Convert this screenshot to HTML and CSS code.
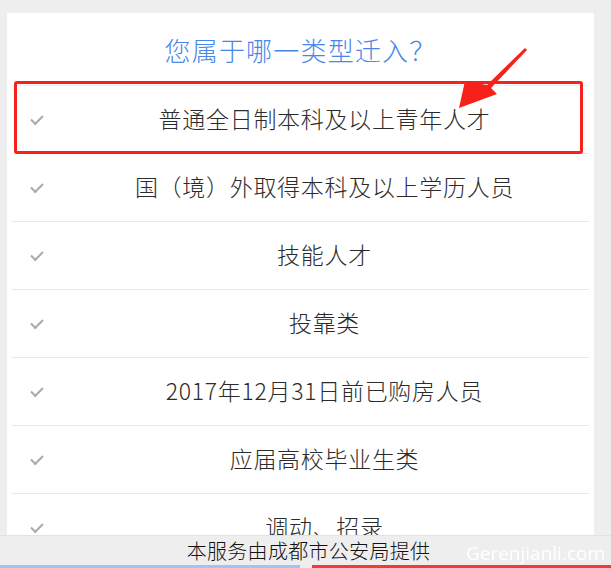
FILE: index.html
```html
<!DOCTYPE html>
<html lang="zh">
<head>
<meta charset="utf-8">
<title>您属于哪一类型迁入？</title>
<link rel="stylesheet" href="styles.css">
</head>
<body>
<div class="card">
  <h1 class="title">您属于哪一类型迁入？</h1>
  <ul class="list">
    <li class="item"><span class="check"></span><span class="label">普通全日制本科及以上青年人才</span></li>
    <li class="item"><span class="check"></span><span class="label">国（境）外取得本科及以上学历人员</span></li>
    <li class="item"><span class="check"></span><span class="label">技能人才</span></li>
    <li class="item"><span class="check"></span><span class="label">投靠类</span></li>
    <li class="item"><span class="check"></span><span class="label">2017年12月31日前已购房人员</span></li>
    <li class="item"><span class="check"></span><span class="label">应届高校毕业生类</span></li>
    <li class="item"><span class="check"></span><span class="label">调动、招录</span></li>
  </ul>
</div>

<div class="highlight"></div>
<svg class="arrow" width="80" height="80" viewBox="0 0 80 80">
  <polygon points="75,0 77,2 41,40 47,46 9,60 15,33 37,37" fill="#f5211a"/>
</svg>

<div class="footer">
  <div class="footer-text">本服务由成都市公安局提供</div>
  <div class="strip"><span class="strip-blue"></span><span class="strip-red"></span></div>
</div>
<div class="watermark">Gerenjianli.com</div>
</body>
</html>
```
FILE: styles.css
```css
html, body {
  margin: 0;
  padding: 0;
  background: #eeeeee;
  font-family: "Noto Sans CJK SC", "Noto Sans", sans-serif;
}
body {
  padding: 13px 17px 0 7px;
}
.card {
  background: #ffffff;
  padding: 0 5px 40px 5px;
}
.title {
  margin: 0;
  height: 72px;
  line-height: 72px;
  text-align: center;
  font-size: 26px;
  font-weight: 300;
  color: #4a86e8;
  letter-spacing: 1.2px;
  padding-left: 0;
  padding-top: 1px;
  box-sizing: border-box;
}
.list {
  list-style: none;
  margin: 0;
  padding: 0;
  border-top: 1px solid #eeeeee;
}
.item {
  display: flex;
  align-items: center;
  height: 67px;
  border-bottom: 1px solid #e8e8e8;
  padding-left: 18px;
}
.check {
  width: 12px;
  height: 8px;
  flex: none;
  position: relative;
  top: 3px;
}
.check::before {
  content: "";
  position: absolute;
  left: 1px;
  top: -4px;
  width: 10px;
  height: 5px;
  border-left: 2px solid #aaaaaa;
  border-bottom: 2px solid #aaaaaa;
  transform: rotate(-45deg);
  transform-origin: center;
}
.label {
  flex: 1;
  margin-left: 18px;
  padding-bottom: 4px;
  text-align: center;
  font-size: 23px;
  font-weight: 300;
  color: #2b2b2b;
  letter-spacing: 0.7px;
}
.highlight {
  position: absolute;
  left: 14px;
  top: 81px;
  width: 563px;
  height: 67px;
  border: 3px solid #f5211a;
  border-radius: 3px;
}
.arrow {
  position: absolute;
  left: 450px;
  top: 48px;
}
.footer {
  position: fixed;
  left: 0;
  right: 0;
  bottom: 0;
  background: #eeeeee;
  border-top: 1px solid #e2e2e2;
}
.footer-text {
  height: 29px;
  line-height: 29px;
  text-align: center;
  font-size: 20px;
  font-weight: 300;
  color: #111111;
  padding-left: 6px;
  letter-spacing: 0.3px;
}
.strip {
  display: flex;
  height: 3px;
  gap: 12px;
}
.strip-blue {
  width: 300px;
  background: #a4c2f4;
}
.strip-red {
  flex: 1;
  background: #ee3b3b;
}
.watermark {
  position: fixed;
  right: 6px;
  bottom: 2px;
  font-family: "Open Sans", "DejaVu Sans", sans-serif;
  font-size: 19px;
  color: #ffffff;
}
```
